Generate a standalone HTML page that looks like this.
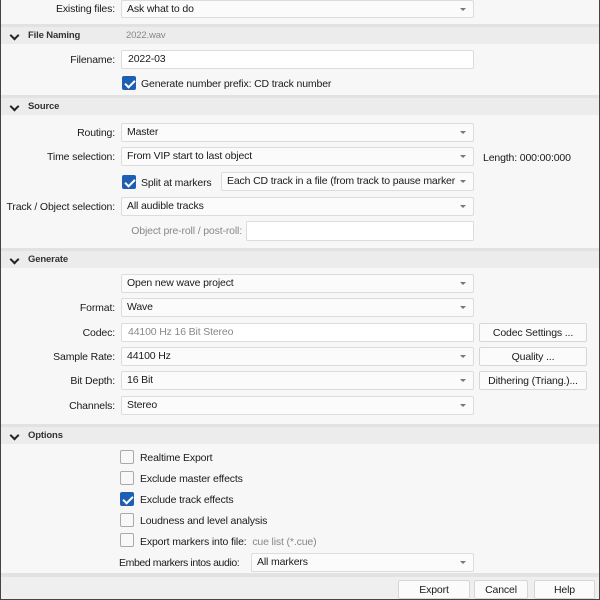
<!DOCTYPE html>
<html><head><style>
*{box-sizing:border-box;margin:0;padding:0}
body{width:600px;height:600px;position:relative;overflow:hidden;background:#f7f7f7;font-family:"Liberation Sans",sans-serif;font-size:10.5px;letter-spacing:-0.15px;color:#1a1a1a}
.frame{position:absolute;left:0;top:0;width:600px;height:600px;border:1px solid #444;border-top:none;pointer-events:none;z-index:10}
.a{position:absolute;white-space:nowrap}
.lbl{position:absolute;text-align:right;white-space:nowrap;line-height:20px}
.dd{position:absolute;background:#fbfbfb;border:1px solid #dcdcdc;border-radius:2px;padding-left:5px;line-height:17px;white-space:nowrap;overflow:hidden}
.dd::after{content:"";position:absolute;right:7px;top:7px;border-left:3px solid transparent;border-right:3px solid transparent;border-top:3px solid #777}
.in{position:absolute;background:#fff;border:1px solid #dcdcdc;border-radius:2px;padding-left:6px;line-height:17px;white-space:nowrap}
.hdr{position:absolute;left:0;width:599px;height:20px;background:#ececec;border-top:3px solid #e2e2e2;font-size:9.5px;font-weight:bold;color:#333;line-height:17px;padding-left:28px}
.hdr::before{content:"";position:absolute;left:11px;top:5px;width:5px;height:5px;border-right:2px solid #222;border-bottom:2px solid #222;transform:rotate(45deg)}
.cb{position:absolute;width:14px;height:14px;border:1px solid #aaa;border-radius:2px;background:#f8f8f8}
.cb.on{background:#1e5fb4;border-color:#1e5fb4}
.cb.on::after{content:"";position:absolute;left:4px;top:1px;width:4px;height:8px;border-right:2px solid #fff;border-bottom:2px solid #fff;transform:rotate(45deg)}
.btn{position:absolute;background:#fbfbfb;border:1px solid #d6d6d6;border-radius:2px;text-align:center;line-height:18px}
.g{color:#888}
</style></head><body>
<div class="lbl" style="right:485px;top:-1px">Existing files:</div>
<div class="dd" style="left:121px;top:0;width:353px;height:18px">Ask what to do</div>

<div class="hdr" style="top:24px">File Naming<span class="g" style="position:absolute;left:126px;font-weight:normal">2022.wav</span></div>
<div class="lbl" style="right:485px;top:50px">Filename:</div>
<div class="in" style="left:121px;top:50px;width:353px;height:19px">2022-03</div>
<div class="cb on" style="left:122px;top:76px"></div>
<div class="a" style="left:141px;top:78px">Generate number prefix: CD track number</div>

<div class="hdr" style="top:95px">Source</div>
<div class="lbl" style="right:485px;top:123px">Routing:</div>
<div class="dd" style="left:121px;top:123px;width:353px;height:19px">Master</div>
<div class="lbl" style="right:485px;top:147px">Time selection:</div>
<div class="dd" style="left:121px;top:147px;width:353px;height:19px">From VIP start to last object</div>
<div class="a" style="left:483px;top:152px">Length: 000:00:000</div>
<div class="cb on" style="left:122px;top:175px"></div>
<div class="a" style="left:141px;top:177px">Split at markers</div>
<div class="dd" style="left:221px;top:172px;width:253px;height:19px;padding-right:14px">Each CD track in a file (from track to pause marker</div>
<div class="lbl" style="right:485px;top:197px">Track / Object selection:</div>
<div class="dd" style="left:121px;top:197px;width:353px;height:19px">All audible tracks</div>
<div class="lbl g" style="right:358px;top:221px">Object pre-roll / post-roll:</div>
<div class="in" style="left:246px;top:221px;width:228px;height:20px"></div>

<div class="hdr" style="top:248px">Generate</div>
<div class="dd" style="left:121px;top:274px;width:353px;height:19px">Open new wave project</div>
<div class="lbl" style="right:485px;top:298px">Format:</div>
<div class="dd" style="left:121px;top:298px;width:353px;height:19px">Wave</div>
<div class="lbl" style="right:485px;top:323px">Codec:</div>
<div class="in g" style="left:121px;top:323px;width:353px;height:19px">44100 Hz 16 Bit Stereo</div>
<div class="btn" style="left:479px;top:323px;width:108px;height:19px">Codec Settings ...</div>
<div class="lbl" style="right:485px;top:347px">Sample Rate:</div>
<div class="dd" style="left:121px;top:347px;width:353px;height:19px">44100 Hz</div>
<div class="btn" style="left:479px;top:347px;width:108px;height:19px">Quality ...</div>
<div class="lbl" style="right:485px;top:371px">Bit Depth:</div>
<div class="dd" style="left:121px;top:371px;width:353px;height:19px">16 Bit</div>
<div class="btn" style="left:479px;top:371px;width:108px;height:19px">Dithering (Triang.)...</div>
<div class="lbl" style="right:485px;top:396px">Channels:</div>
<div class="dd" style="left:121px;top:396px;width:353px;height:19px">Stereo</div>

<div class="hdr" style="top:424px">Options</div>
<div class="cb" style="left:120px;top:450px"></div><div class="a" style="left:140px;top:452px">Realtime Export</div>
<div class="cb" style="left:120px;top:471px"></div><div class="a" style="left:140px;top:473px">Exclude master effects</div>
<div class="cb on" style="left:120px;top:492px"></div><div class="a" style="left:140px;top:494px">Exclude track effects</div>
<div class="cb" style="left:120px;top:513px"></div><div class="a" style="left:140px;top:515px">Loudness and level analysis</div>
<div class="cb" style="left:120px;top:533px"></div><div class="a" style="left:140px;top:536px">Export markers into file: <span class="g" style="margin-left:3px">cue list (*.cue)</span></div>
<div class="a" style="left:119px;top:557px;letter-spacing:-0.4px">Embed markers intos audio:</div>
<div class="dd" style="left:251px;top:553px;width:223px;height:19px">All markers</div>

<div style="position:absolute;left:0;top:573px;width:600px;height:4px;background:#e2e2e2"></div>
<div style="position:absolute;left:0;top:577px;width:600px;height:23px;background:#efefef"></div>
<div class="btn" style="left:398px;top:580px;width:72px;height:19px">Export</div>
<div class="btn" style="left:474px;top:580px;width:54px;height:19px">Cancel</div>
<div class="btn" style="left:534px;top:580px;width:61px;height:19px">Help</div>
<div class="frame"></div>
</body></html>
